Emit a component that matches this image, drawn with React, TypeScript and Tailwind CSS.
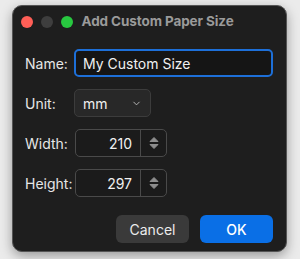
import { ChevronDown } from "lucide-react";

function Stepper() {
  return (
    <svg width="10" height="14" viewBox="0 0 10 14" className="text-[#8e8e8e]">
      <path d="M5 1.5 L9 5.5 H1 Z" fill="currentColor" strokeLinejoin="round" stroke="currentColor" strokeWidth="1" />
      <path d="M5 12.5 L9 8.5 H1 Z" fill="currentColor" strokeLinejoin="round" stroke="currentColor" strokeWidth="1" />
    </svg>
  );
}

function NumberField({ label, value }: { label: string; value: string }) {
  return (
    <div className="flex items-center">
      <span className="w-[50px] text-[14px] text-[#e6e6e6]">{label}</span>
      <div className="flex h-[28px] w-[92px] items-stretch rounded-[5px] border border-[#4a4a4a] bg-[#1b1b1b]">
        <div className="flex flex-1 items-center justify-end pr-[8px] text-[14px] text-[#f0f0f0]">{value}</div>
        <div className="w-px bg-[#4a4a4a]" />
        <div className="flex w-[25px] items-center justify-center">
          <Stepper />
        </div>
      </div>
    </div>
  );
}

export default function App() {
  return (
    <div
      className="h-[259px] w-[300px] bg-[#ebebeb] pl-[12px] pt-[5px]"
      style={{ fontFamily: "Inter, 'Liberation Sans', sans-serif" }}
    >
      <div className="flex h-[247px] w-[275px] flex-col rounded-[10px] border border-[#555] bg-[#1e1e1e] shadow-[0_4px_12px_rgba(0,0,0,0.35)]">
        <div className="flex h-[30px] items-center pl-[7.5px] pt-px">
          <span className="h-[12px] w-[12px] rounded-full bg-[#ff5f57]" />
          <span className="ml-[8px] h-[12px] w-[12px] rounded-full bg-[#3e3e3e]" />
          <span className="ml-[8px] h-[12px] w-[12px] rounded-full bg-[#28c840]" />
          <span className="ml-[9px] text-[13.5px] font-bold tracking-[-0.1px] text-[#9a9a9a]">
            Add Custom Paper Size
          </span>
        </div>

        <div className="flex flex-col gap-[12px] pl-[12px] pt-[13px]">
          <div className="flex items-center">
            <span className="w-[49px] text-[14px] text-[#e6e6e6]">Name:</span>
            <div className="flex h-[28px] w-[199px] items-center rounded-[5px] border-2 border-[#1d6fd8] bg-[#151515] pl-[7px] text-[14px] text-[#f0f0f0]">
              My Custom Size
            </div>
          </div>

          <div className="flex items-center">
            <span className="w-[49px] text-[14px] text-[#e6e6e6]">Unit:</span>
            <div className="flex h-[28px] w-[77px] items-center justify-between rounded-[5px] border border-[#3c3c3c] bg-[#282828] pl-[8px] pr-[8px] text-[14px] text-[#f0f0f0]">
              mm
              <ChevronDown className="h-[11px] w-[11px] text-[#bdbdbd]" strokeWidth={2} />
            </div>
          </div>

          <NumberField label="Width:" value="210" />
          <NumberField label="Height:" value="297" />
        </div>

        <div className="mt-[18px] flex justify-end gap-[11px] pr-[13px]">
          <button className="h-[28px] w-[73px] rounded-[6px] bg-[#3a3a3a] text-[14px] text-[#ececec]">Cancel</button>
          <button className="h-[28px] w-[73px] rounded-[6px] bg-[#0a6fe6] text-[14px] font-medium text-white">OK</button>
        </div>
      </div>
    </div>
  );
}
